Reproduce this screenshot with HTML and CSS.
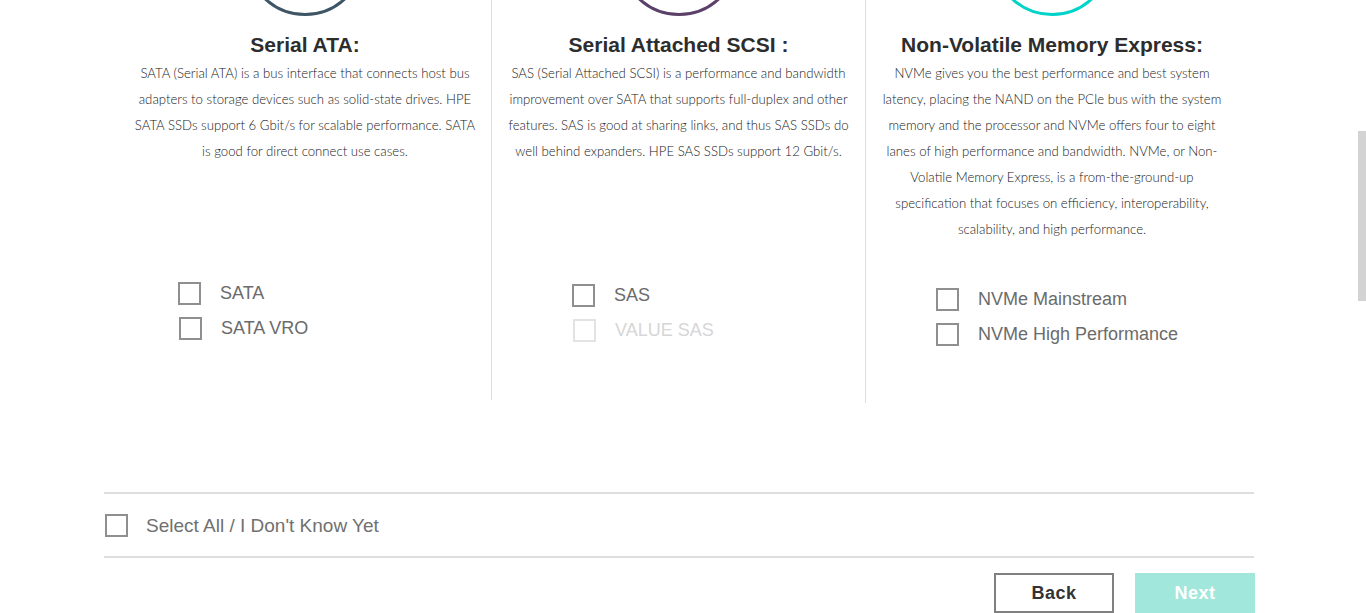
FILE: index.html
```html
<!DOCTYPE html>
<html lang="en">
<head>
<meta charset="utf-8">
<title>Drive interface</title>
<link rel="stylesheet" href="styles.css">
</head>
<body>
<div class="page">
  <div class="row">
    <section class="col">
      <div class="ring ring-sata"></div>
      <h2 class="title">Serial ATA:</h2>
      <p class="desc">SATA (Serial ATA) is a bus interface that connects host bus adapters to storage devices such as solid-state drives. HPE SATA SSDs support 6 Gbit/s for scalable performance. SATA is good for direct connect use cases.</p>
      <div class="options opt-sata">
        <label class="check"><span class="box"></span><span class="lbl">SATA</span></label>
        <label class="check shift1"><span class="box"></span><span class="lbl">SATA VRO</span></label>
      </div>
    </section>
    <section class="col col-div col-sas">
      <div class="ring ring-sas"></div>
      <h2 class="title">Serial Attached SCSI :</h2>
      <p class="desc">SAS (Serial Attached SCSI) is a performance and bandwidth improvement over SATA that supports full-duplex and other features. SAS is good at sharing links, and thus SAS SSDs do well behind expanders. HPE SAS SSDs support 12 Gbit/s.</p>
      <div class="options opt-sas">
        <label class="check"><span class="box"></span><span class="lbl">SAS</span></label>
        <label class="check shift1 disabled"><span class="box"></span><span class="lbl">VALUE SAS</span></label>
      </div>
    </section>
    <section class="col col-div col-nvme">
      <div class="ring ring-nvme"></div>
      <h2 class="title">Non-Volatile Memory Express:</h2>
      <p class="desc">NVMe gives you the best performance and best system latency, placing the NAND on the PCIe bus with the system memory and the processor and NVMe offers four to eight lanes of high performance and bandwidth. NVMe, or Non-Volatile Memory Express, is a from-the-ground-up specification that focuses on efficiency, interoperability, scalability, and high performance.</p>
      <div class="options opt-nvme">
        <label class="check"><span class="box"></span><span class="lbl">NVMe Mainstream</span></label>
        <label class="check"><span class="box"></span><span class="lbl">NVMe High Performance</span></label>
      </div>
    </section>
  </div>

  <div class="all-row">
    <label class="check check-all"><span class="box"></span><span class="lbl">Select All / I Don't Know Yet</span></label>
  </div>

  <div class="actions">
    <button class="btn btn-back" type="button">Back</button>
    <button class="btn btn-next" type="button">Next</button>
  </div>
</div>
<div class="scroll-thumb"></div>
</body>
</html>
```

FILE: styles.css
```css
html, body {
  margin: 0;
  padding: 0;
  background: #fff;
  overflow: hidden;
}
body {
  font-family: "Liberation Sans", Arial, sans-serif;
  color: #333;
}
.page {
  width: 1150px;
  margin-left: 104px;
}
.row {
  display: flex;
  align-items: flex-start;
  margin: 0 15px;
}
.col {
  width: 373px;
  flex: 0 0 373px;
  display: flex;
  flex-direction: column;
  align-items: center;
  margin-top: -104px;
}
.col-div {
  border-left: 1px solid #ddd;
}
.col-sas { padding-bottom: 58px; }
.col-nvme { padding-bottom: 57px; width: 372px; flex-basis: 372px; }
.col:first-child { padding-bottom: 60px; width: 372px; flex-basis: 372px; }

.ring {
  width: 120px;
  height: 120px;
  border-radius: 50%;
  border: 3px solid #3e5565;
  box-sizing: border-box;
  margin-bottom: 17px;
}
.ring-sas { border-color: #5b4069; }
.ring-nvme { border-color: #01d3c8; }

.title {
  margin: 0;
  font-size: 21px;
  line-height: 24px;
  font-weight: 700;
  color: #2d2d2d;
  text-align: center;
}
.desc {
  margin: 3px 0 0;
  width: 348px;
  height: 200px;
  font-family: "Lato", "Liberation Sans", sans-serif;
  font-weight: 300;
  font-size: 13.2px;
  line-height: 26px;
  color: #222;
  text-align: center;
}
.options {
  align-self: stretch;
  display: flex;
  flex-direction: column;
  gap: 12px;
}
.opt-sata { padding: 22px 0 0 59px; }
.opt-sas { padding: 24px 0 0 80px; }
.opt-nvme { padding: 28px 0 0 70px; }

.check {
  display: flex;
  align-items: center;
  gap: 19px;
  font-size: 18px;
  color: #6b6b6b;
  cursor: pointer;
}
.check-all { font-size: 19px; color: #707070; gap: 18px; }
.shift1 { margin-left: 1px; }
.box {
  width: 23px;
  height: 23px;
  box-sizing: border-box;
  border: 2px solid #8f8f8f;
  flex: 0 0 auto;
}
.lbl { line-height: 23px; }
.disabled { color: #d6d6d6; }
.disabled .box { border-color: #e3e3e3; }

.all-row {
  margin-top: 89px;
  border-top: 2px solid #dedede;
  border-bottom: 2px solid #dedede;
  padding: 20px 0 19px 1px;
}
.actions {
  display: flex;
  justify-content: flex-end;
  gap: 21px;
  margin-top: 15px;
  margin-right: -1px;
}
.btn {
  width: 120px;
  height: 40px;
  box-sizing: border-box;
  font-family: "Liberation Sans", Arial, sans-serif;
  font-size: 18px;
  font-weight: 700;
  letter-spacing: 0.5px;
}
.btn-back {
  background: #fff;
  border: 2px solid #808080;
  color: #333;
}
.btn-next {
  background: #a2e7db;
  border: 0;
  color: #fff;
}
.scroll-thumb {
  position: fixed;
  right: 0;
  top: 131px;
  width: 8px;
  height: 170px;
  background: #d3d3d3;
}
```
